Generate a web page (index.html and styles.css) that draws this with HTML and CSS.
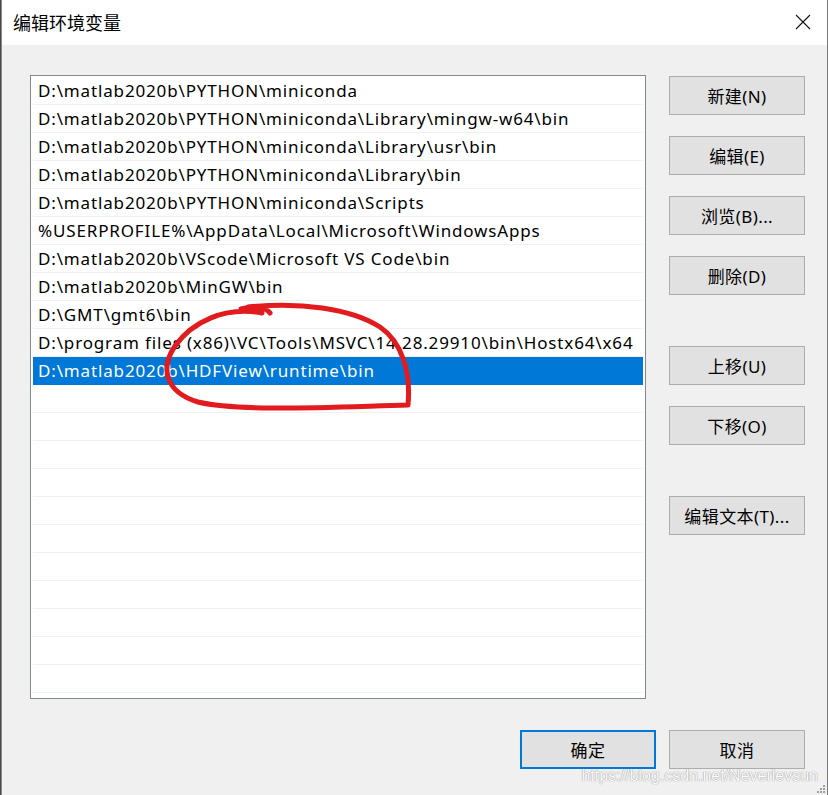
FILE: index.html
```html
<!DOCTYPE html>
<html lang="zh-CN">
<head>
<meta charset="utf-8">
<title>编辑环境变量</title>
<link rel="stylesheet" href="styles.css">
</head>
<body>
<div class="window">
  <div class="titlebar">
    <span class="title">编辑环境变量</span>
    <span class="close">
      <svg width="16" height="16" viewBox="0 0 16 16"><path d="M1 1 L15 15 M15 1 L1 15" stroke="#111" stroke-width="1.1" fill="none"/></svg>
    </span>
  </div>
  <div class="content">
    <div class="main">
      <div class="listbox">
        <div class="row">D:\matlab2020b\PYTHON\miniconda</div>
        <div class="row">D:\matlab2020b\PYTHON\miniconda\Library\mingw-w64\bin</div>
        <div class="row">D:\matlab2020b\PYTHON\miniconda\Library\usr\bin</div>
        <div class="row">D:\matlab2020b\PYTHON\miniconda\Library\bin</div>
        <div class="row">D:\matlab2020b\PYTHON\miniconda\Scripts</div>
        <div class="row">%USERPROFILE%\AppData\Local\Microsoft\WindowsApps</div>
        <div class="row">D:\matlab2020b\VScode\Microsoft VS Code\bin</div>
        <div class="row">D:\matlab2020b\MinGW\bin</div>
        <div class="row">D:\GMT\gmt6\bin</div>
        <div class="row">D:\program files (x86)\VC\Tools\MSVC\14.28.29910\bin\Hostx64\x64</div>
        <div class="row selected">D:\matlab2020b\HDFView\runtime\bin</div>
        <div class="row"></div>
        <div class="row"></div>
        <div class="row"></div>
        <div class="row"></div>
        <div class="row"></div>
        <div class="row"></div>
        <div class="row"></div>
        <div class="row"></div>
        <div class="row"></div>
        <div class="row"></div>
        <div class="row last"></div>
      </div>
      <div class="side">
        <button class="btn">新建(N)</button>
        <button class="btn">编辑(E)</button>
        <button class="btn">浏览(B)...</button>
        <button class="btn">删除(D)</button>
        <button class="btn group">上移(U)</button>
        <button class="btn">下移(O)</button>
        <button class="btn group">编辑文本(T)...</button>
      </div>
    </div>
    <div class="footer">
      <button class="btn primary">确定</button>
      <button class="btn">取消</button>
    </div>
  </div>
  <svg class="scribble" width="828" height="795" viewBox="0 0 828 795">
    <path d="M241 309 C252 306 266 307 270 313 M262 313 C225 306 192 322 175 346 C160 368 165 392 198 402 C240 412 330 407 408 405 C411 372 402 342 380 327 C350 308 300 302 248 307" stroke="#e21b1f" stroke-width="5" fill="none" stroke-linecap="round" stroke-linejoin="round"/>
  </svg>
  <div class="watermark">https://blog.csdn.net/Neverlevsun</div>
  <svg class="grip" width="10" height="10" viewBox="0 0 10 10">
    <rect x="7" y="1" width="2" height="2" fill="#a0a0a0"/>
    <rect x="4" y="4" width="2" height="2" fill="#a0a0a0"/>
    <rect x="7" y="4" width="2" height="2" fill="#a0a0a0"/>
    <rect x="1" y="7" width="2" height="2" fill="#a0a0a0"/>
    <rect x="4" y="7" width="2" height="2" fill="#a0a0a0"/>
    <rect x="7" y="7" width="2" height="2" fill="#a0a0a0"/>
  </svg>
</div>
</body>
</html>
```

FILE: styles.css
```css
html, body {
  margin: 0;
  padding: 0;
  background: #4a4a4a;
}
body {
  width: 828px;
  height: 795px;
  overflow: hidden;
  font-family: "Noto Sans", "Noto Sans CJK SC", sans-serif;
  color: #000;
}
.window {
  position: relative;
  margin-left: 1px;
  width: 825px;
  height: 795px;
  border-left: 1px solid #8a8a8a;
  border-right: 1px solid #777;
  background: #f0f0f0;
  box-sizing: content-box;
}
.titlebar {
  height: 45px;
  background: #fff;
  display: flex;
  align-items: center;
  justify-content: space-between;
}
.title {
  margin-left: 11px;
  font-family: "Noto Sans CJK SC", sans-serif;
  font-size: 18px;
  color: #000;
  margin-top: -2px;
}
.close {
  width: 16px;
  height: 16px;
  margin-right: 16px;
  margin-top: -2px;
  display: flex;
}
.content {
  padding: 30px 20px 0 28px;
}
.main {
  display: flex;
  align-items: flex-start;
}
.listbox {
  width: 610px;
  height: 620px;
  border: 1px solid #828790;
  background: #fff;
  padding: 1px 2px 1px 2px;
  overflow: hidden;
}
.row {
  height: 27px;
  border-bottom: 1px solid #f0f0f0;
  font-size: 17px;
  line-height: 27px;
  padding-left: 5px;
  white-space: nowrap;
  letter-spacing: 0.85px;
}
.row.selected {
  background: #0078d7;
  color: #fff;
  border-bottom-color: #0078d7;
}
.side {
  margin-left: 23px;
  display: flex;
  flex-direction: column;
  gap: 21px;
  padding-top: 1px;
}
.btn {
  width: 136px;
  height: 39px;
  background: #e1e1e1;
  border: 1px solid #adadad;
  font-family: "Noto Sans", "Noto Sans CJK SC", sans-serif;
  font-size: 17px;
  letter-spacing: 0.4px;
  color: #000;
  padding: 0;
  margin: 0;
  box-sizing: border-box;
}
.btn.group {
  margin-top: 30px;
}
.btn.primary {
  border: 2px solid #0078d7;
}
.footer {
  display: flex;
  justify-content: flex-end;
  gap: 13px;
  margin-top: 31px;
  margin-right: 2px;
}
.scribble {
  position: absolute;
  left: -2px;
  top: 0;
  pointer-events: none;
}
.watermark {
  position: absolute;
  right: 9px;
  top: 767px;
  font-family: "Liberation Sans", sans-serif;
  font-size: 16px;
  color: #fbfbfb;
  text-shadow: 0 0 1px #9a9a9a, 0 0 1px #9a9a9a;
}
.grip {
  position: absolute;
  right: 1px;
  bottom: 1px;
}
```
